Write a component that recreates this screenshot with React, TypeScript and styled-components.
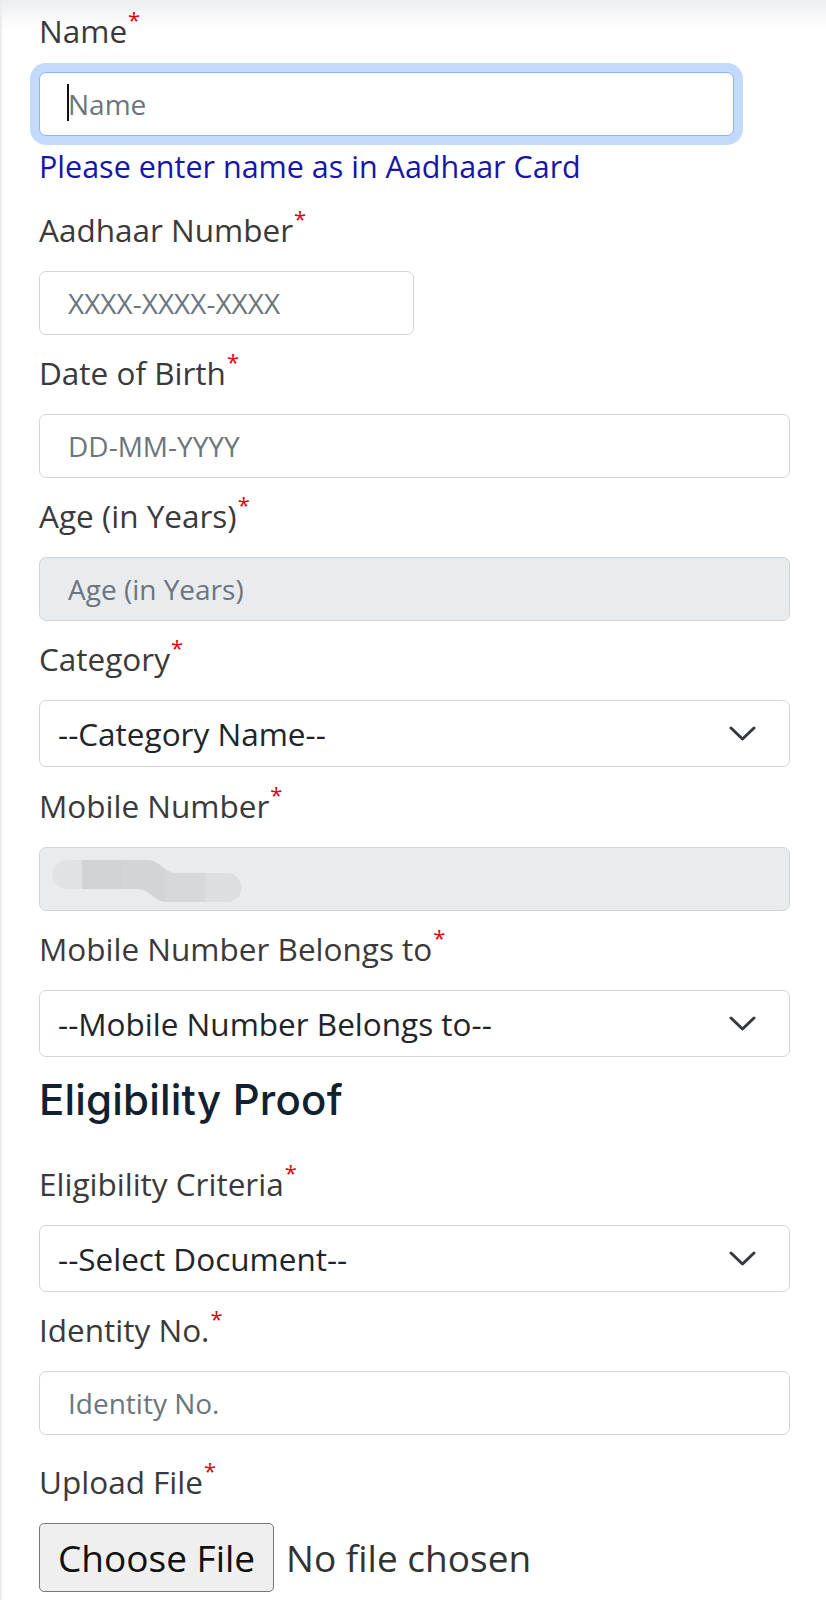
import React from "react";
import styled, { createGlobalStyle } from "styled-components";

const Global = createGlobalStyle`
  html, body { margin: 0; padding: 0; background: #fff; }
  body { font-family: "Open Sans", "Noto Sans", sans-serif; }
  * { box-sizing: border-box; }
`;

const Page = styled.div`
  width: 826px;
  min-height: 1600px;
  padding: 9px 36px 0 37px;
  border-left: 2px solid #ededed;
  background: linear-gradient(to bottom, #eceef1 0, #ffffff 30px) no-repeat;
  display: flex;
  flex-direction: column;
`;

const Group = styled.div<{ $mb?: number }>`
  display: flex;
  flex-direction: column;
  align-items: flex-start;
  margin-bottom: ${(p) => (p.$mb ?? 16)}px;
`;

const Label = styled.label`
  font-family: "Open Sans", sans-serif;
  font-size: 31.5px;
  font-weight: 500;
  line-height: 44px;
  color: #3a3a3a;
  margin-bottom: 19px;
`;

const Star = styled.span`
  color: #e3000f;
  font-size: 22px;
  line-height: 0;
  vertical-align: 15px;
  margin-left: 1px;
`;

const Field = styled.div<{ $w?: number }>`
  position: relative;
  width: ${(p) => (p.$w ? `${p.$w}px` : "100%")};
`;

const Input = styled.input<{ $disabled?: boolean; $focus?: boolean }>`
  display: block;
  width: 100%;
  height: 64px;
  padding: 0 28px;
  font-family: "Open Sans", sans-serif;
  font-size: 28px;
  color: #212529;
  background: ${(p) => (p.$disabled ? "#e9ecef" : "#fff")};
  border: 1.5px solid ${(p) => (p.$focus ? "#86b7fe" : "#d2d5d8")};
  border-radius: 7px;
  outline: none;
  box-shadow: ${(p) => (p.$focus ? "0 0 0 9px #c3dafc" : "none")};
  &::placeholder { color: #6c757d; opacity: 1; }
`;

const Caret = styled.span`
  position: absolute;
  left: 28px;
  top: 12px;
  width: 2px;
  height: 37px;
  background: #111;
`;

const Helper = styled.div`
  margin-top: 12px;
  font-family: "Open Sans", sans-serif;
  font-size: 30.5px;
  line-height: 37px;
  color: #1616a8;
`;

const Select = styled.select`
  display: block;
  width: 100%;
  height: 67px;
  padding: 0 60px 0 18px;
  font-family: "Open Sans", sans-serif;
  font-size: 31.5px;
  font-weight: 500;
  color: #212529;
  background: #fff;
  border: 1.5px solid #d2d5d8;
  border-radius: 7px;
  appearance: none;
  -webkit-appearance: none;
  outline: none;
`;

const Chevron = styled.svg`
  position: absolute;
  right: 34px;
  top: 26px;
  width: 27px;
  height: 15px;
  pointer-events: none;
`;

const Redaction = styled.svg`
  position: absolute;
  left: 13px;
  top: 13px;
  width: 190px;
  height: 42px;
`;

const Heading = styled.h2`
  margin: 5px 0 40px;
  font-family: Inter, Lato, sans-serif;
  font-size: 42px;
  font-weight: 500;
  letter-spacing: 0.2px;
  line-height: 44px;
  color: #12212f;
`;

const FileRow = styled.div`
  display: flex;
  align-items: center;
  gap: 12px;
`;

const FileButton = styled.button`
  height: 69px;
  padding: 0 18px;
  font-family: "Open Sans", sans-serif;
  font-size: 37px;
  color: #111;
  background: #efefef;
  border: 1.5px solid #767676;
  border-radius: 5px;
`;

const FileText = styled.span`
  font-family: "Open Sans", sans-serif;
  font-size: 37px;
  color: #333;
`;

const ChevronIcon = () => (
  <Chevron viewBox="0 0 27 15" fill="none">
    <path d="M2 2 L13.5 13 L25 2" stroke="#343a40" strokeWidth="3" strokeLinecap="round" strokeLinejoin="round" />
  </Chevron>
);

const SelectField = ({ text }: { text: string }) => (
  <Field>
    <Select defaultValue="">
      <option value="">{text}</option>
    </Select>
    <ChevronIcon />
  </Field>
);

const Req = ({ children }: { children: React.ReactNode }) => (
  <Label>
    {children}
    <Star>*</Star>
  </Label>
);

const RedactBlob = () => (
  <Redaction viewBox="0 0 190 42">
    <defs>
      <clipPath id="blob">
        <path d="M15 0 H95 C108 0 112 13 125 13 H175 A14.5 14.5 0 0 1 175 42 H115 C102 42 98 29 85 29 H15 A14.5 14.5 0 0 1 15 0 Z" />
      </clipPath>
    </defs>
    <g clipPath="url(#blob)">
      <rect x="0" y="0" width="30" height="42" fill="#e0e2e4" />
      <rect x="30" y="0" width="40" height="42" fill="#d0d2d4" />
      <rect x="70" y="0" width="43" height="42" fill="#d2d4d6" />
      <rect x="113" y="0" width="40" height="42" fill="#d6d8da" />
      <rect x="153" y="0" width="37" height="42" fill="#dcdee0" />
    </g>
  </Redaction>
);

export default function App() {
  return (
    <>
      <Global />
      <Page>
        <Group $mb={23}>
          <Req>Name</Req>
          <Field $w={695}>
            <Input $focus placeholder="Name" readOnly />
            <Caret />
          </Field>
          <Helper>Please enter name as in Aadhaar Card</Helper>
        </Group>

        <Group>
          <Req>Aadhaar Number</Req>
          <Field $w={375}>
            <Input placeholder="XXXX-XXXX-XXXX" readOnly />
          </Field>
        </Group>

        <Group>
          <Req>Date of Birth</Req>
          <Field>
            <Input placeholder="DD-MM-YYYY" readOnly />
          </Field>
        </Group>

        <Group>
          <Req>Age (in Years)</Req>
          <Field>
            <Input $disabled placeholder="Age (in Years)" readOnly />
          </Field>
        </Group>

        <Group $mb={17}>
          <Req>Category</Req>
          <SelectField text="--Category Name--" />
        </Group>

        <Group>
          <Req>Mobile Number</Req>
          <Field>
            <Input $disabled readOnly />
            <RedactBlob />
          </Field>
        </Group>

        <Group>
          <Req>Mobile Number Belongs to</Req>
          <SelectField text="--Mobile Number Belongs to--" />
        </Group>

        <Heading>Eligibility Proof</Heading>

        <Group>
          <Req>Eligibility Criteria</Req>
          <SelectField text="--Select Document--" />
        </Group>

        <Group $mb={25}>
          <Req>Identity No.</Req>
          <Field>
            <Input placeholder="Identity No." readOnly />
          </Field>
        </Group>

        <Group>
          <Req>Upload File</Req>
          <FileRow>
            <FileButton type="button">Choose File</FileButton>
            <FileText>No file chosen</FileText>
          </FileRow>
        </Group>
      </Page>
    </>
  );
}
